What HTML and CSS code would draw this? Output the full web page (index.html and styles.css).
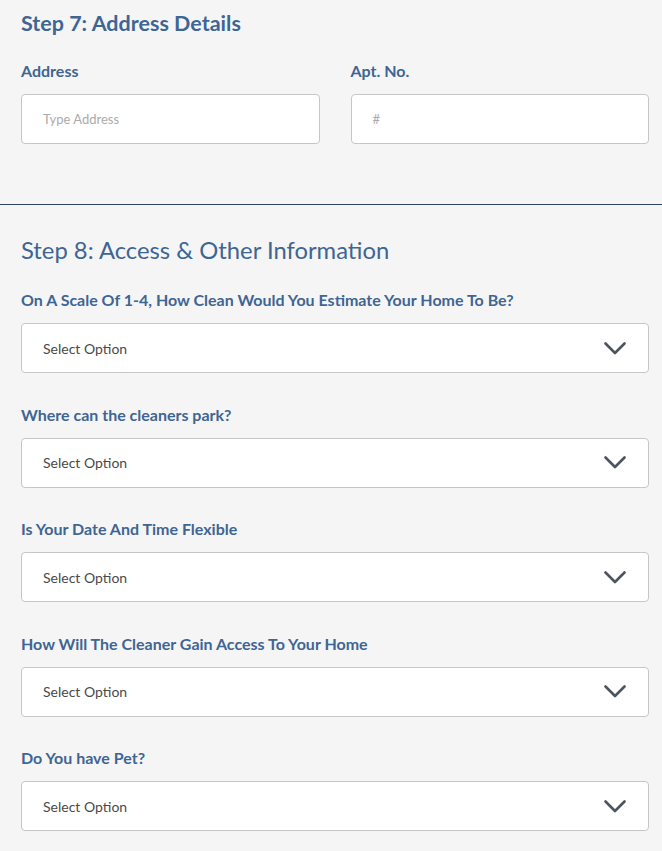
FILE: index.html
```html
<!DOCTYPE html>
<html>
    <head>
        <meta charset="utf-8" />
        <title>Booking - Address &amp; Access</title>
        <link rel="stylesheet" href="styles.css">
    </head>
    <body>
        <div class="step step-address">
            <h2 class="step-title bold">Step 7: Address Details</h2>
            <div class="row">
                <div class="field">
                    <label class="label">Address</label>
                    <input class="input" type="text" placeholder="Type Address">
                </div>
                <div class="field">
                    <label class="label">Apt. No.</label>
                    <input class="input" type="text" placeholder="#">
                </div>
            </div>
        </div>

        <div class="step step-access">
            <h2 class="step-title">Step 8: Access &amp; Other Information</h2>
            <div class="field">
                <label class="label">On A Scale Of 1-4, How Clean Would You Estimate Your Home To Be?</label>
                <div class="select"><span>Select Option</span><svg class="chev" viewBox="0 0 22 13"><path d="M1.5 1.5 L11 11 L20.5 1.5"/></svg></div>
            </div>
            <div class="field">
                <label class="label">Where can the cleaners park?</label>
                <div class="select"><span>Select Option</span><svg class="chev" viewBox="0 0 22 13"><path d="M1.5 1.5 L11 11 L20.5 1.5"/></svg></div>
            </div>
            <div class="field">
                <label class="label">Is Your Date And Time Flexible</label>
                <div class="select"><span>Select Option</span><svg class="chev" viewBox="0 0 22 13"><path d="M1.5 1.5 L11 11 L20.5 1.5"/></svg></div>
            </div>
            <div class="field">
                <label class="label">How Will The Cleaner Gain Access To Your Home</label>
                <div class="select"><span>Select Option</span><svg class="chev" viewBox="0 0 22 13"><path d="M1.5 1.5 L11 11 L20.5 1.5"/></svg></div>
            </div>
            <div class="field">
                <label class="label">Do You have Pet?</label>
                <div class="select"><span>Select Option</span><svg class="chev" viewBox="0 0 22 13"><path d="M1.5 1.5 L11 11 L20.5 1.5"/></svg></div>
            </div>
        </div>
    </body>
</html>
```

FILE: styles.css
```css
body {
    margin: 0;
    background: #f5f5f5;
    font-family: Lato, "Open Sans", sans-serif;
    color: #444;
}
.step {
    padding: 0 13px 0 21px;
}
.step-address {
    padding-top: 8px;
    padding-bottom: 60px;
    border-bottom: 1px solid #2d4566;
}
.step-access {
    padding-top: 30px;
}
.step-title {
    margin: 0 0 23px 0;
    font-size: 23.8px;
    line-height: 30px;
    font-weight: 400;
    color: #3f6593;
}
.step-title.bold {
    font-size: 21.5px;
    font-weight: 700;
}
.step-access .step-title {
    margin-bottom: 25px;
}
.row {
    display: grid;
    grid-template-columns: 1fr 1fr;
    gap: 31px;
}
.field {
    display: flex;
    flex-direction: column;
}
.step-access .field + .field {
    margin-top: 31.5px;
}
.label {
    font-size: 16px;
    line-height: 20px;
    font-weight: 700;
    color: #3f6593;
    margin-bottom: 13px;
}
.input, .select {
    box-sizing: border-box;
    height: 50px;
    background: #fff;
    border: 1px solid #c6c6c6;
    border-radius: 4px;
    font-family: Lato, "Open Sans", sans-serif;
}
.input {
    width: 100%;
    padding: 0 21px;
    font-size: 13px;
    color: #444;
    outline: none;
}
.input::placeholder {
    color: #ababab;
}
.select {
    display: flex;
    align-items: center;
    justify-content: space-between;
    padding: 0 22px 0 21px;
    font-size: 14px;
    color: #4a4a4a;
}
.chev {
    width: 22px;
    height: 13px;
    fill: none;
    stroke: #4b5561;
    stroke-width: 2.6;
    stroke-linecap: round;
    stroke-linejoin: round;
}
```
